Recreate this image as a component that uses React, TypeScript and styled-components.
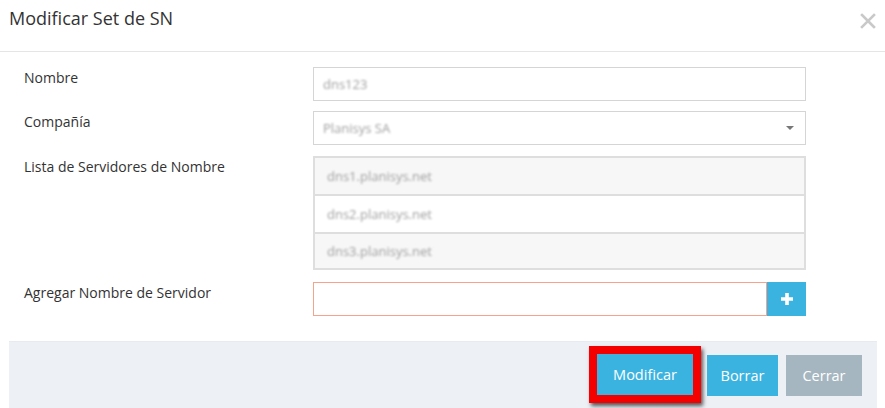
import React from "react";
import styled, { createGlobalStyle } from "styled-components";

const Global = createGlobalStyle`
  html, body { margin: 0; padding: 0; background: #fff; }
  body { font-family: "Open Sans", "Noto Sans", sans-serif; color: #333; }
  * { box-sizing: border-box; }
`;

const Modal = styled.div`
  width: 885px;
  height: 408px;
  overflow: hidden;
  background: #fff;
  display: flex;
  flex-direction: column;
`;

const Header = styled.div`
  height: 52px;
  padding: 6px 9px 0 9px;
  border-bottom: 1px solid #e5e5e5;
  display: flex;
  justify-content: space-between;
  align-items: flex-start;
`;

const Title = styled.h4`
  margin: 0;
  font-size: 18px;
  line-height: 24px;
  font-weight: 400;
  color: #333;
`;

const Close = styled.button`
  border: 0;
  background: none;
  padding: 0;
  margin-top: 7px;
  margin-right: 0;
  width: 16px;
  height: 16px;
  display: flex;
  cursor: pointer;
`;

const Body = styled.div`
  padding: 15px 79px 25px 24px;
  display: flex;
  flex-direction: column;
`;

const Row = styled.div<{ $mb: number }>`
  display: grid;
  grid-template-columns: 289px 493px;
  margin-bottom: ${(p) => p.$mb}px;
`;

const Label = styled.label`
  font-size: 14px;
  line-height: 20px;
  color: #333;
  padding-top: 1px;
`;

const Field = styled.div`
  height: 34px;
  border: 1px solid #d5d5d5;
  background: #fff;
  display: flex;
  align-items: center;
  padding: 0 10px 0 9px;
  justify-content: space-between;
`;

const Value = styled.span`
  font-size: 13px;
  color: #a0a0a0;
  filter: blur(1.1px);
`;

const Caret = styled.span`
  width: 0;
  height: 0;
  border-left: 4px solid transparent;
  border-right: 4px solid transparent;
  border-top: 4px solid #777;
  margin-right: 1px;
`;

const List = styled.div`
  display: flex;
  flex-direction: column;
  border: 2px solid #dedede;
`;

const Item = styled.div<{ $alt: boolean }>`
  height: 38px;
  display: flex;
  align-items: center;
  padding-left: 12px;
  background: ${(p) => (p.$alt ? "#f7f7f7" : "#fff")};
  & + & { border-top: 2px solid #dedede; }
  &:first-child { height: 36px; }
  &:last-child { height: 36px; }
`;

const InputGroup = styled.div`
  display: flex;
  height: 34px;
`;

const TextInput = styled.input`
  flex: 1;
  height: 34px;
  border: 1px solid #f5a38c;
  outline: none;
  font-family: inherit;
  font-size: 13px;
  padding: 0 9px;
`;

const AddButton = styled.button`
  width: 39px;
  height: 34px;
  border: 0;
  background: #3bb3e0;
  display: flex;
  align-items: center;
  justify-content: center;
  padding: 0;
  cursor: pointer;
`;

const Footer = styled.div`
  margin: 0 8px 0 9px;
  flex: 1;
  background: #edf1f6;
  border-top: 1px solid #e6ebf1;
  display: flex;
  justify-content: flex-end;
  align-items: flex-start;
  padding: 4px 15px 0 0;
`;

const Highlight = styled.span`
  display: inline-flex;
  border: 8px solid #f40000;
  box-shadow: 2px 3px 4px rgba(0, 0, 0, 0.65);
  margin-right: 6px;
`;

const Btn = styled.button<{ $variant: "primary" | "muted"; $w: number }>`
  width: ${(p) => p.$w}px;
  height: 41px;
  border: 0;
  font-family: inherit;
  font-size: 14.5px;
  color: #fff;
  background: ${(p) => (p.$variant === "primary" ? "#3bb3e0" : "#a5b6c0")};
  cursor: pointer;
  padding: 0;
`;

const BtnGap = styled.span`
  width: 8px;
`;

const FooterButtons = styled.div`
  display: flex;
  align-items: flex-start;
`;

const PlainBtnWrap = styled.div`
  padding-top: 9px;
  display: flex;
`;

export default function App() {
  return (
    <>
      <Global />
      <Modal>
        <Header>
          <Title>Modificar Set de SN</Title>
          <Close aria-label="Cerrar">
            <svg width="16" height="16" viewBox="0 0 16 16">
              <path d="M2 2 L14 14 M14 2 L2 14" stroke="#c9c9c9" strokeWidth="2.6" strokeLinecap="square" />
            </svg>
          </Close>
        </Header>
        <Body>
          <Row $mb={10}>
            <Label>Nombre</Label>
            <Field>
              <Value>dns123</Value>
            </Field>
          </Row>
          <Row $mb={11}>
            <Label>Compañía</Label>
            <Field>
              <Value>Planisys SA</Value>
              <Caret />
            </Field>
          </Row>
          <Row $mb={12}>
            <Label>Lista de Servidores de Nombre</Label>
            <List>
              <Item $alt={true}><Value>dns1.planisys.net</Value></Item>
              <Item $alt={false}><Value>dns2.planisys.net</Value></Item>
              <Item $alt={true}><Value>dns3.planisys.net</Value></Item>
            </List>
          </Row>
          <Row $mb={0}>
            <Label>Agregar Nombre de Servidor</Label>
            <InputGroup>
              <TextInput />
              <AddButton aria-label="Agregar">
                <svg width="14" height="14" viewBox="0 0 14 14">
                  <path d="M7 1 V13 M1 7 H13" stroke="#fff" strokeWidth="3.6" />
                </svg>
              </AddButton>
            </InputGroup>
          </Row>
        </Body>
        <Footer>
          <FooterButtons>
            <Highlight>
              <Btn $variant="primary" $w={96}>Modificar</Btn>
            </Highlight>
            <PlainBtnWrap>
              <Btn $variant="primary" $w={71}>Borrar</Btn>
              <BtnGap />
              <Btn $variant="muted" $w={76}>Cerrar</Btn>
            </PlainBtnWrap>
          </FooterButtons>
        </Footer>
      </Modal>
    </>
  );
}
